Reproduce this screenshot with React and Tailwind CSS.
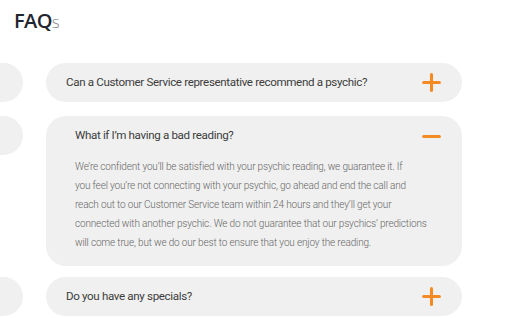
import { Plus, Minus } from 'lucide-react';

const faqs = [
    {
        q: 'Can a Customer Service representative recommend a psychic?',
        open: false,
        gap: 'mb-[14px]',
    },
    {
        q: 'What if I’m having a bad reading?',
        open: true,
        gap: 'mb-[11px]',
        a: [
            'We’re confident you’ll be satisfied with your psychic reading, we guarantee it. If',
            'you feel you’re not connecting with your psychic, go ahead and end the call and',
            'reach out to our Customer Service team within 24 hours and they’ll get your',
            'connected with another psychic. We do not guarantee that our psychics’ predictions',
            'will come true, but we do our best to ensure that you enjoy the reading.',
        ],
    },
    {
        q: 'Do you have any specials?',
        open: false,
        gap: '',
    },
];

function App() {
    return (
        <div className="w-[512px] h-[318px] overflow-hidden bg-white font-['Roboto',sans-serif]">
            <h1 className="pl-[14px] pt-[9px] h-[63px] text-[20px] leading-[24px] font-semibold text-[#1f2630] font-['Open_Sans',sans-serif] tracking-[-0.6px]">
                FAQ<span className="text-[17px] font-light text-[#888]">s</span>
            </h1>

            <div className="flex flex-col">
                {faqs.map((item) => (
                    <div key={item.q} className={`flex items-start gap-[23px] -ml-[40px] ${item.gap}`}>
                        {/* left column, cut off by the viewport */}
                        <div className="w-[63px] h-[39px] shrink-0 rounded-r-[20px] bg-[#f0f0f0]" />

                        <div className="w-[416px] rounded-[20px] bg-[#f0f0f0]">
                            {item.open ? (
                                <div className="pl-[29px] pr-[17px] pt-[10px] pb-[14px]">
                                    <div className="flex items-center justify-between h-[20px]">
                                        <span className="text-[11.6px] tracking-[-0.35px] text-[#3c3c3c]">{item.q}</span>
                                        <Minus className="w-[27px] h-[27px] text-[#f38a22]" strokeWidth={2.7} />
                                    </div>
                                    <p className="mt-[11px] text-[10px] tracking-[-0.16px] leading-[19px] font-light text-[#666]">
                                        {item.a.map((line) => (
                                            <span key={line} className="block whitespace-nowrap">{line}</span>
                                        ))}
                                    </p>
                                </div>
                            ) : (
                                <div className="flex items-center justify-between h-[39px] pl-[20px] pr-[17px]">
                                    <span className="text-[11.6px] tracking-[-0.35px] text-[#3c3c3c]">{item.q}</span>
                                    <Plus className="w-[27px] h-[27px] text-[#f38a22]" strokeWidth={2.7} />
                                </div>
                            )}
                        </div>
                    </div>
                ))}
            </div>
        </div>
    );
}

export default App;
